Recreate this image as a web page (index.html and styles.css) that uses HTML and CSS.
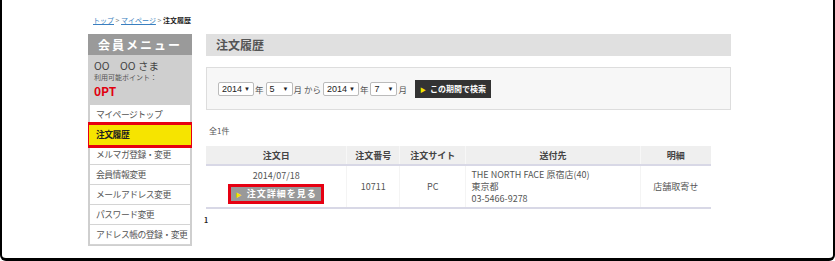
FILE: index.html
```html
<!DOCTYPE html>
<html lang="ja">
<head>
    <meta charset="UTF-8">
    <title>注文履歴</title>
    <link rel="stylesheet" href="styles.css">
</head>
<body>

<div class="frame">
    <div class="page">
        <div class="breadcrumb">
            <a href="#">トップ</a> &gt; <a href="#">マイページ</a> &gt; <strong>注文履歴</strong>
        </div>

        <div class="columns">
            <div class="sidebar">
                <div class="side-head">会員メニュー</div>
                <div class="user-info">
                    <p class="user-name">OO　OO さま</p>
                    <p class="point-label">利用可能ポイント：</p>
                    <p class="point-value">0PT</p>
                </div>
                <ul class="side-menu">
                    <li>マイページトップ</li>
                    <li class="active">注文履歴</li>
                    <li>メルマガ登録・変更</li>
                    <li>会員情報変更</li>
                    <li>メールアドレス変更</li>
                    <li>パスワード変更</li>
                    <li>アドレス帳の登録・変更</li>
                </ul>
            </div>

            <div class="main">
                <h2 class="page-title">注文履歴</h2>

                <div class="search-box">
                    <span class="fake-select w-year">2014<i>▼</i></span><span class="unit">年</span>
                    <span class="fake-select w-month">5<i>▼</i></span><span class="unit">月 から</span>
                    <span class="fake-select w-year">2014<i>▼</i></span><span class="unit">年</span>
                    <span class="fake-select w-month">7<i>▼</i></span><span class="unit">月</span>
                    <button class="search-btn"><span class="arrow">▶</span>この期間で検索</button>
                </div>

                <p class="count">全1件</p>

                <table class="orders">
                    <tr>
                        <th class="c-date">注文日</th>
                        <th class="c-no">注文番号</th>
                        <th class="c-site">注文サイト</th>
                        <th class="c-addr">送付先</th>
                        <th class="c-detail">明細</th>
                    </tr>
                    <tr>
                        <td>
                            2014/07/18<br>
                            <button class="detail-btn"><span class="arrow">▶</span>注文詳細を見る</button>
                        </td>
                        <td>10711</td>
                        <td>PC</td>
                        <td class="addr">THE NORTH FACE 原宿店(40)<br>東京都<br>03-5466-9278</td>
                        <td>店舗取寄せ</td>
                    </tr>
                </table>

                <p class="pager">1</p>
            </div>
        </div>
    </div>
</div>

</body>
</html>
```

FILE: styles.css
```css
body {
    margin: 0;
    font-family: "Noto Sans CJK JP", "DejaVu Sans", sans-serif;
    color: #444;
    background-color: #fff;
}
p {
    margin: 0;
}
.frame {
    width: 835px;
    height: 261px;
    box-sizing: border-box;
    border-left: 2px solid #000;
    border-right: 2px solid #000;
    border-bottom: 3px solid #000;
    border-radius: 0 0 6px 6px;
    overflow: hidden;
}
.page {
    padding-left: 86px;
}
.breadcrumb {
    padding: 15px 0 0 5px;
    height: 12px;
    font-size: 7px;
    line-height: 10px;
    margin-bottom: 7px;
    color: #888;
}
.breadcrumb a {
    color: #3a7fc0;
}
.breadcrumb strong {
    color: #222;
}
.columns {
    display: flex;
    gap: 14px;
}

/* sidebar */
.sidebar {
    width: 104px;
    height: 212px;
    background-color: #cfcfcf;
    overflow: hidden;
}
.side-head {
    height: 21px;
    line-height: 21px;
    background-color: #9a9a9a;
    color: #fff;
    font-size: 12px;
    font-weight: bold;
    text-align: center;
    letter-spacing: 2px;
}
.user-info {
    height: 50px;
    padding: 4px 6px 0;
    box-sizing: border-box;
}
.user-name {
    font-size: 10.5px;
    line-height: 13px;
    color: #444;
}
.point-label {
    font-size: 7px;
    line-height: 10px;
    color: #555;
}
.point-value {
    font-size: 12px;
    line-height: 17px;
    font-weight: bold;
    color: #e00010;
}
.side-menu {
    list-style: none;
    margin: 0 2px;
    padding: 0;
}
.side-menu li {
    height: 20px;
    line-height: 20px;
    box-sizing: border-box;
    border-bottom: 1px solid #d4d4d4;
    background-color: #fff;
    padding-left: 6px;
    font-size: 8.8px;
    letter-spacing: -0.5px;
    color: #555;
    white-space: nowrap;
}
.side-menu li.active {
    position: relative;
    height: 26px;
    line-height: 20px;
    margin: -3px -4px;
    padding-left: 7px;
    border: 3px solid #e60012;
    background-color: #f6e400;
    color: #222;
    font-weight: bold;
}

/* main */
.main {
    width: 525px;
}
.page-title {
    margin: 0;
    height: 22px;
    line-height: 22px;
    padding-left: 10px;
    background-color: #e0e0e0;
    font-size: 12px;
    color: #555;
}
.search-box {
    margin-top: 11px;
    height: 43px;
    box-sizing: border-box;
    border: 1px solid #ddd;
    background-color: #f7f7f7;
    padding: 0 11px;
    display: flex;
    align-items: center;
    font-size: 8.5px;
    color: #555;
}
.fake-select {
    display: inline-flex;
    justify-content: space-between;
    align-items: center;
    height: 14px;
    box-sizing: border-box;
    border: 1px solid #bbb;
    border-radius: 2px;
    background-color: #fff;
    padding: 0 3px;
    font-family: "Liberation Sans", Arial, sans-serif;
    font-size: 9px;
    color: #222;
}
.fake-select i {
    font-style: normal;
    font-size: 6px;
}
.w-year {
    width: 36px;
}
.w-month {
    width: 27px;
}
.unit {
    margin: 0 2px 0 1px;
}
.search-btn {
    margin-left: 6px;
    height: 18px;
    width: 76px;
    padding: 0;
    border: none;
    background-color: #333;
    color: #fff;
    font-family: inherit;
    font-size: 8px;
    font-weight: bold;
}
.arrow {
    color: #f6e400;
    font-size: 6px;
    margin-right: 4px;
}
.count {
    margin-top: 15px;
    font-size: 8px;
    line-height: 12px;
    padding-left: 3px;
    color: #555;
}
.orders {
    margin-top: 9px;
    width: 505px;
    border-collapse: collapse;
    font-size: 9px;
    color: #555;
}
.orders th {
    height: 18px;
    padding: 0;
    background-color: #efefef;
    border-left: 1px solid #f7f7f7;
    border-bottom: 2px solid #d8d8e6;
    font-weight: bold;
    color: #444;
}
.orders td {
    height: 41px;
    padding: 0;
    text-align: center;
    line-height: 12px;
    border-left: 1px solid #f4f4f4;
    border-bottom: 2px solid #d8d8e6;
}
.orders th:first-child,
.orders td:first-child {
    border-left: none;
}
.c-date { width: 141px; }
.c-no { width: 52px; }
.c-site { width: 66px; }
.c-addr { width: 175px; }
.c-detail { width: 71px; }
.orders td.addr {
    text-align: left;
    padding-left: 5px;
}
.detail-btn {
    margin-top: 2px;
    width: 96px;
    height: 20px;
    padding: 0;
    border: 3px solid #e60012;
    background-color: #999;
    color: #fff;
    font-family: inherit;
    font-size: 9px;
    font-weight: bold;
    letter-spacing: 1px;
}
.pager {
    margin-top: 6px;
    margin-left: -2px;
    font-size: 7px;
    font-weight: bold;
    color: #222;
}
```
